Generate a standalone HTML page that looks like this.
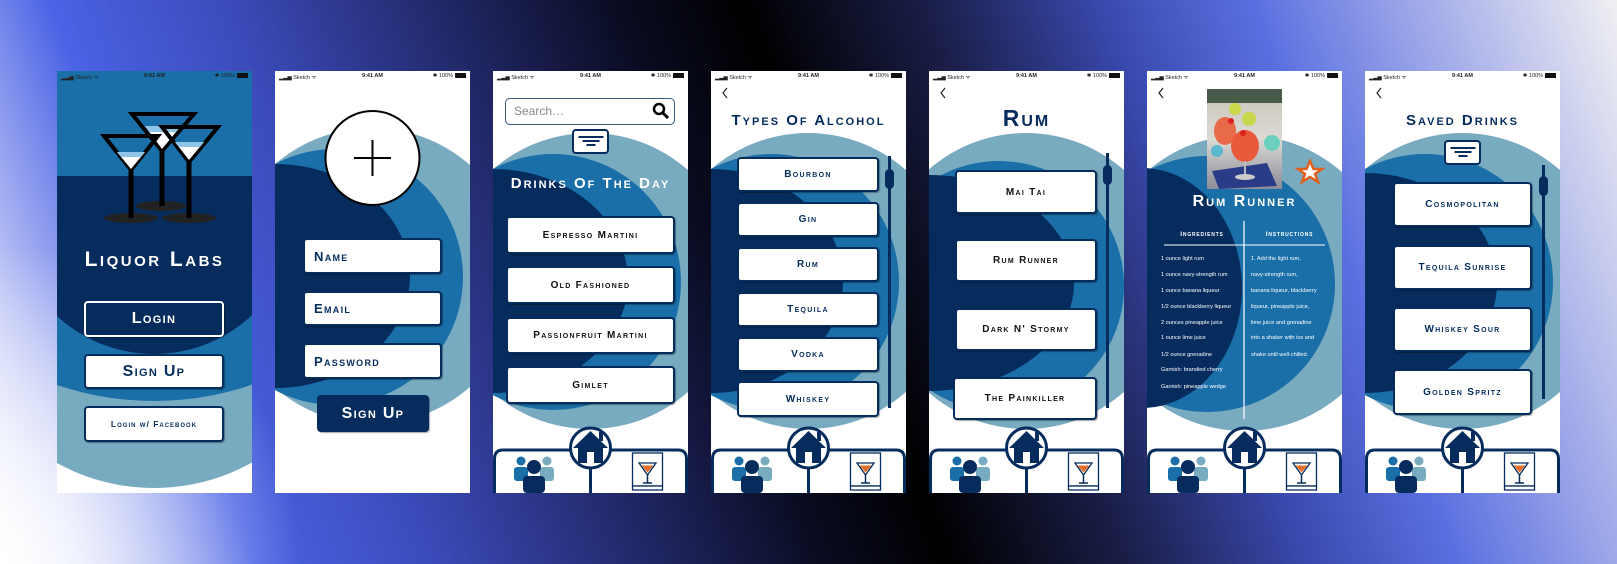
<!DOCTYPE html>
<html><head><meta charset="utf-8"><style>
*{margin:0;padding:0;box-sizing:border-box}
body{width:1617px;height:564px;overflow:hidden;position:relative;font-family:"Liberation Sans",sans-serif;
background:
radial-gradient(ellipse 300px 320px at 0% 100%,rgba(255,255,255,.95),rgba(255,255,255,0) 100%),
linear-gradient(70deg,#ffffff 0%,#b8c0f4 6%,#4a63e5 14%,#3b4ab8 24%,#22296a 35%,#0a0c22 45%,#000 52%,#1a1e48 62%,#3a4ab0 72%,#5a70e0 80%,#a8b0ea 90%,#f0f0f2 100%);}
.s{position:absolute;top:71px;width:195px;height:422px;overflow:hidden;background:#fff}
.bg{position:absolute;left:0;top:0}
.st{position:absolute;left:0;top:0;width:195px;height:11px;font-size:5.5px;color:#222}
.st .l{position:absolute;left:4px;top:2px}
.st .c{position:absolute;left:0;width:195px;text-align:center;top:2px;font-weight:bold}
.st .r{position:absolute;right:4px;top:2px}
.bat{display:inline-block;width:11px;height:5px;background:#111;vertical-align:-1px;margin-left:2px}
.btn{position:absolute;background:#fff;border:2px solid #062c5e;border-radius:4px;box-shadow:1px 1px 1px rgba(0,0,0,.35);display:flex;align-items:center;justify-content:center;font-weight:bold;font-variant:small-caps;color:#111;letter-spacing:1.3px;font-size:10px;white-space:nowrap}
.ttl{position:absolute;left:0;width:195px;text-align:center;font-weight:bold;font-variant:small-caps;letter-spacing:2px;white-space:nowrap}
.sb{position:absolute;width:3px;background:#062c5e}
.th{position:absolute;width:9px;height:20px;border-radius:5px;background:#062c5e}
.flt{position:absolute;width:37px;height:25px;border:2px solid #062c5e;border-radius:4px;background:#fff}
.flt i{position:absolute;height:2px;background:#062c5e;left:50%;transform:translateX(-50%)}
.tx{position:absolute;font-size:5.6px;color:#fff;white-space:nowrap}
</style></head><body>

<!-- Screen 1 -->
<div class="s" style="left:57px;background:#fff">
<svg class="bg" width="195" height="422">
<rect width="195" height="422" fill="#fff"/>
<circle cx="97" cy="216" r="201" fill="#78aac0"/>
<rect x="0" y="0" width="195" height="105" fill="#1a6fa8"/>
<circle cx="97" cy="28" r="302" fill="#1a6fa8" clip-path="url(#c1)"/>
<clipPath id="c1"><rect x="0" y="0" width="195" height="400"/></clipPath>
<clipPath id="c2"><rect x="0" y="105" width="195" height="300"/></clipPath>
<circle cx="97" cy="140" r="143" fill="#062c5e" clip-path="url(#c2)"/>
<ellipse cx="104" cy="135" rx="25" ry="5" fill="#222"/>
<ellipse cx="74" cy="147" rx="27" ry="5" fill="#222"/>
<ellipse cx="132" cy="147" rx="27" ry="5" fill="#222"/>
<polygon points="75,43 137,43 105,80" fill="none" stroke="#000" stroke-width="4"/>
<polygon points="88,55 124,55 105,78" fill="#fff"/>
<polygon points="88,55 124,55 119,61 93,61" fill="#8fc6e8"/>
<line x1="105" y1="80" x2="105" y2="135" stroke="#000" stroke-width="5"/>
<polygon points="47,65 101,65 74,99" fill="none" stroke="#000" stroke-width="4"/>
<polygon points="60,81 88,81 74,98" fill="#fff"/>
<polygon points="60,81 88,81 84,86 64,86" fill="#8fc6e8"/>
<line x1="74" y1="99" x2="74" y2="147" stroke="#000" stroke-width="5"/>
<polygon points="105,56 161,56 132,91" fill="none" stroke="#000" stroke-width="4"/>
<polygon points="118,71 147,71 132,89" fill="#fff"/>
<polygon points="118,71 147,71 143,76 122,76" fill="#8fc6e8"/>
<line x1="132" y1="91" x2="132" y2="147" stroke="#000" stroke-width="5"/>
</svg>
<div class="st"><span class="l">▂▃▅ Sketch ᯤ</span><span class="c">9:41 AM</span><span class="r">✱ 100%<span class="bat"></span></span></div>
<div class="ttl" style="top:177px;font-size:21px;color:#fff;letter-spacing:2.5px">Liquor Labs</div>
<div class="btn" style="left:27px;top:230px;width:140px;height:36px;background:#062c5e;border-color:#fff;color:#fff;font-size:16px">Login</div>
<div class="btn" style="left:27px;top:283px;width:140px;height:35px;color:#062c5e;font-size:16px">Sign Up</div>
<div class="btn" style="left:27px;top:335px;width:140px;height:36px;color:#062c5e;font-size:8.5px;letter-spacing:1px">Login w/ Facebook</div>
</div>

<!-- Screen 2 -->
<div class="s" style="left:275px">
<svg class="bg" width="195" height="422">
<circle cx="97" cy="205" r="148" fill="#78aac0"/>
<circle cx="60" cy="206" r="128" fill="#1a6fa8"/>
<ellipse cx="0" cy="205" rx="135" ry="112" fill="#062c5e"/>
<circle cx="97.5" cy="87" r="47" fill="#fff" stroke="#000" stroke-width="2"/>
<line x1="79" y1="87" x2="116" y2="87" stroke="#000" stroke-width="2"/>
<line x1="97.5" y1="69" x2="97.5" y2="105" stroke="#000" stroke-width="2"/>
</svg>
<div class="st"><span class="l">▂▃▅ Sketch ᯤ</span><span class="c">9:41 AM</span><span class="r">✱ 100%<span class="bat"></span></span></div>
<div class="btn" style="left:28px;top:167px;width:139px;height:36px;justify-content:flex-start;padding-left:9px;color:#062c5e;font-size:13px">Name</div>
<div class="btn" style="left:28px;top:220px;width:139px;height:35px;justify-content:flex-start;padding-left:9px;color:#062c5e;font-size:13px">Email</div>
<div class="btn" style="left:28px;top:272px;width:139px;height:36px;justify-content:flex-start;padding-left:9px;color:#062c5e;font-size:13px">Password</div>
<div class="btn" style="left:42px;top:324px;width:112px;height:37px;background:#062c5e;border-color:#062c5e;color:#fff;font-size:16px">Sign Up</div>
</div>

<!-- Screen 3 -->
<div class="s" style="left:493px">
<svg class="bg" width="195" height="422">
<circle cx="97" cy="210" r="148" fill="#78aac0"/>
<circle cx="60" cy="211" r="128" fill="#1a6fa8"/>
<ellipse cx="0" cy="210" rx="135" ry="112" fill="#062c5e"/>
</svg>
<div class="st"><span class="l">▂▃▅ Sketch ᯤ</span><span class="c">9:41 AM</span><span class="r">✱ 100%<span class="bat"></span></span></div>
<div style="position:absolute;left:12px;top:27px;width:170px;height:27px;border:1.5px solid #3a5a80;border-radius:5px;background:#fff;font-size:12px;color:#888;padding:5px 8px">Search…</div>
<svg style="position:absolute;left:159px;top:31px" width="18" height="18"><circle cx="7" cy="7" r="5" fill="none" stroke="#000" stroke-width="2.5"/><line x1="10.5" y1="10.5" x2="16" y2="16" stroke="#000" stroke-width="3"/></svg>
<div class="flt" style="left:79px;top:58px"><i style="top:5px;width:25px"></i><i style="top:9px;width:17px"></i><i style="top:13px;width:9px"></i></div>
<div class="ttl" style="top:104px;font-size:15px;color:#fff">Drinks Of The Day</div>
<div class="btn" style="left:13px;top:145px;width:169px;height:38px">Espresso Martini</div>
<div class="btn" style="left:13px;top:195px;width:169px;height:38px">Old Fashioned</div>
<div class="btn" style="left:13px;top:246px;width:169px;height:37px">Passionfruit Martini</div>
<div class="btn" style="left:13px;top:295px;width:169px;height:38px">Gimlet</div>
<svg style="position:absolute;left:0;top:350px" width="195" height="72">
<path d="M1.5,72 V38 Q1.5,29 10,29 H185 Q193.5,29 193.5,38 V72" fill="#fff" stroke="#062c5e" stroke-width="3"/>
<line x1="97.5" y1="46" x2="97.5" y2="72" stroke="#062c5e" stroke-width="3"/>
<circle cx="97.5" cy="27" r="20" fill="#fff" stroke="#062c5e" stroke-width="3"/>
<polygon points="80,27 97.5,10 115,27" fill="#062c5e"/><rect x="106" y="11" width="4" height="9" fill="#062c5e"/>
<rect x="85" y="24" width="25" height="18" fill="#062c5e"/><rect x="94" y="31" width="7" height="11" fill="#fff"/>
<circle cx="28" cy="40" r="4.5" fill="#1a6fa8"/><rect x="21" y="46" width="14" height="14" rx="3" fill="#1a6fa8"/>
<circle cx="54" cy="40" r="4.5" fill="#78aac0"/><rect x="47" y="46" width="14" height="14" rx="3" fill="#78aac0"/>
<circle cx="41" cy="46" r="7" fill="#062c5e"/><rect x="30" y="55" width="22" height="17" rx="4" fill="#062c5e"/>
<rect x="139.5" y="32" width="30" height="33" fill="#fff" stroke="#062c5e" stroke-width="1.3"/>
<rect x="139.5" y="65" width="30" height="4" fill="#fff" stroke="#062c5e" stroke-width="1.3"/>
<polygon points="146,42 163,42 154.5,54" fill="#fff" stroke="#062c5e" stroke-width="1.3"/>
<polygon points="148.5,44.5 160.5,44.5 154.5,51.5" fill="#e0702a"/>
<line x1="154.5" y1="54" x2="154.5" y2="62" stroke="#062c5e" stroke-width="1.5"/><line x1="150" y1="62" x2="159" y2="62" stroke="#062c5e" stroke-width="1.5"/>
</svg>
</div>

<!-- Screen 4 -->
<div class="s" style="left:711px">
<svg class="bg" width="195" height="422">
<circle cx="97" cy="210" r="148" fill="#78aac0"/>
<circle cx="60" cy="211" r="128" fill="#1a6fa8"/>
<ellipse cx="0" cy="210" rx="132" ry="112" fill="#062c5e"/>
<polyline points="16,17 12,22 16,27" fill="none" stroke="#222" stroke-width="1.2"/>
</svg>
<div class="st"><span class="l">▂▃▅ Sketch ᯤ</span><span class="c">9:41 AM</span><span class="r">✱ 100%<span class="bat"></span></span></div>
<div class="ttl" style="top:41px;font-size:15px;color:#062c5e">Types Of Alcohol</div>
<div class="btn" style="left:26px;top:86px;width:142px;height:35px;color:#062c5e">Bourbon</div>
<div class="btn" style="left:26px;top:131px;width:142px;height:35px;color:#062c5e">Gin</div>
<div class="btn" style="left:26px;top:176px;width:142px;height:35px;color:#062c5e">Rum</div>
<div class="btn" style="left:26px;top:221px;width:142px;height:35px;color:#062c5e">Tequila</div>
<div class="btn" style="left:26px;top:266px;width:142px;height:35px;color:#062c5e">Vodka</div>
<div class="btn" style="left:26px;top:310px;width:142px;height:36px;color:#062c5e">Whiskey</div>
<div class="sb" style="left:177px;top:85px;height:252px"></div><div class="th" style="left:174px;top:98px"></div>
<svg style="position:absolute;left:0;top:350px" width="195" height="72">
<path d="M1.5,72 V38 Q1.5,29 10,29 H185 Q193.5,29 193.5,38 V72" fill="#fff" stroke="#062c5e" stroke-width="3"/>
<line x1="97.5" y1="46" x2="97.5" y2="72" stroke="#062c5e" stroke-width="3"/>
<circle cx="97.5" cy="27" r="20" fill="#fff" stroke="#062c5e" stroke-width="3"/>
<polygon points="80,27 97.5,10 115,27" fill="#062c5e"/><rect x="106" y="11" width="4" height="9" fill="#062c5e"/>
<rect x="85" y="24" width="25" height="18" fill="#062c5e"/><rect x="94" y="31" width="7" height="11" fill="#fff"/>
<circle cx="28" cy="40" r="4.5" fill="#1a6fa8"/><rect x="21" y="46" width="14" height="14" rx="3" fill="#1a6fa8"/>
<circle cx="54" cy="40" r="4.5" fill="#78aac0"/><rect x="47" y="46" width="14" height="14" rx="3" fill="#78aac0"/>
<circle cx="41" cy="46" r="7" fill="#062c5e"/><rect x="30" y="55" width="22" height="17" rx="4" fill="#062c5e"/>
<rect x="139.5" y="32" width="30" height="33" fill="#fff" stroke="#062c5e" stroke-width="1.3"/>
<rect x="139.5" y="65" width="30" height="4" fill="#fff" stroke="#062c5e" stroke-width="1.3"/>
<polygon points="146,42 163,42 154.5,54" fill="#fff" stroke="#062c5e" stroke-width="1.3"/>
<polygon points="148.5,44.5 160.5,44.5 154.5,51.5" fill="#e0702a"/>
<line x1="154.5" y1="54" x2="154.5" y2="62" stroke="#062c5e" stroke-width="1.5"/><line x1="150" y1="62" x2="159" y2="62" stroke="#062c5e" stroke-width="1.5"/>
</svg>
</div>

<!-- Screen 5 -->
<div class="s" style="left:929px">
<svg class="bg" width="195" height="422">
<circle cx="97" cy="210" r="148" fill="#78aac0"/>
<circle cx="70" cy="215" r="125" fill="#1a6fa8"/>
<ellipse cx="0" cy="212" rx="145" ry="108" fill="#062c5e"/>
<polyline points="16,17 12,22 16,27" fill="none" stroke="#222" stroke-width="1.2"/>
</svg>
<div class="st"><span class="l">▂▃▅ Sketch ᯤ</span><span class="c">9:41 AM</span><span class="r">✱ 100%<span class="bat"></span></span></div>
<div class="ttl" style="top:34px;font-size:23px;color:#062c5e">Rum</div>
<div class="btn" style="left:26px;top:99px;width:142px;height:44px">Mai Tai</div>
<div class="btn" style="left:26px;top:168px;width:142px;height:43px">Rum Runner</div>
<div class="btn" style="left:26px;top:237px;width:142px;height:43px">Dark N' Stormy</div>
<div class="btn" style="left:24px;top:306px;width:144px;height:43px">The Painkiller</div>
<div class="sb" style="left:177px;top:82px;height:255px"></div><div class="th" style="left:174px;top:94px"></div>
<svg style="position:absolute;left:0;top:350px" width="195" height="72">
<path d="M1.5,72 V38 Q1.5,29 10,29 H185 Q193.5,29 193.5,38 V72" fill="#fff" stroke="#062c5e" stroke-width="3"/>
<line x1="97.5" y1="46" x2="97.5" y2="72" stroke="#062c5e" stroke-width="3"/>
<circle cx="97.5" cy="27" r="20" fill="#fff" stroke="#062c5e" stroke-width="3"/>
<polygon points="80,27 97.5,10 115,27" fill="#062c5e"/><rect x="106" y="11" width="4" height="9" fill="#062c5e"/>
<rect x="85" y="24" width="25" height="18" fill="#062c5e"/><rect x="94" y="31" width="7" height="11" fill="#fff"/>
<circle cx="28" cy="40" r="4.5" fill="#1a6fa8"/><rect x="21" y="46" width="14" height="14" rx="3" fill="#1a6fa8"/>
<circle cx="54" cy="40" r="4.5" fill="#78aac0"/><rect x="47" y="46" width="14" height="14" rx="3" fill="#78aac0"/>
<circle cx="41" cy="46" r="7" fill="#062c5e"/><rect x="30" y="55" width="22" height="17" rx="4" fill="#062c5e"/>
<rect x="139.5" y="32" width="30" height="33" fill="#fff" stroke="#062c5e" stroke-width="1.3"/>
<rect x="139.5" y="65" width="30" height="4" fill="#fff" stroke="#062c5e" stroke-width="1.3"/>
<polygon points="146,42 163,42 154.5,54" fill="#fff" stroke="#062c5e" stroke-width="1.3"/>
<polygon points="148.5,44.5 160.5,44.5 154.5,51.5" fill="#e0702a"/>
<line x1="154.5" y1="54" x2="154.5" y2="62" stroke="#062c5e" stroke-width="1.5"/><line x1="150" y1="62" x2="159" y2="62" stroke="#062c5e" stroke-width="1.5"/>
</svg>
</div>

<!-- Screen 6 -->
<div class="s" style="left:1147px">
<svg class="bg" width="195" height="422">
<circle cx="97" cy="212" r="148" fill="#78aac0"/>
<circle cx="60" cy="213" r="128" fill="#1a6fa8"/>
<ellipse cx="-5" cy="217" rx="100" ry="120" fill="#062c5e"/>
<polyline points="16,17 12,22 16,27" fill="none" stroke="#222" stroke-width="1.2"/>
<defs><linearGradient id="ph" x1="0" y1="0" x2="0" y2="1"><stop offset="0" stop-color="#c8c4b8"/><stop offset=".5" stop-color="#dcdad4"/><stop offset="1" stop-color="#8a8c98"/></linearGradient></defs>
<rect x="60" y="18" width="75" height="100" fill="url(#ph)"/>
<rect x="60" y="18" width="75" height="14" fill="#4a5a48"/>
<polygon points="65,100 120,92 130,115 72,118" fill="#2a3c88"/>
<ellipse cx="78" cy="60" rx="11" ry="14" fill="#e86a48"/>
<ellipse cx="98" cy="75" rx="14" ry="16" fill="#e85a3a"/>
<circle cx="102" cy="48" r="7" fill="#c8d84a"/><circle cx="88" cy="38" r="6" fill="#c8d84a"/>
<circle cx="84" cy="50" r="3" fill="#e02020"/><circle cx="96" cy="62" r="3" fill="#e02020"/>
<circle cx="70" cy="80" r="6" fill="#5ab8d0"/><circle cx="125" cy="72" r="8" fill="#6ad0c0"/>
<line x1="98" y1="90" x2="98" y2="105" stroke="#bbb" stroke-width="2"/><ellipse cx="98" cy="106" rx="10" ry="3" fill="#ccc"/>
<polygon points="163,90 166.5,98 175,98 168,103 171,111 163,106 155,111 158,103 151,98 159.5,98" fill="#fff" stroke="#e0601a" stroke-width="2.5"/>
<line x1="17" y1="174" x2="178" y2="174" stroke="#fff" stroke-width="1"/>
<line x1="97" y1="150" x2="97" y2="348" stroke="#fff" stroke-width="1.2"/>
</svg>
<div class="st"><span class="l">▂▃▅ Sketch ᯤ</span><span class="c">9:41 AM</span><span class="r">✱ 100%<span class="bat"></span></span></div>
<div class="ttl" style="top:122px;font-size:16px;color:#fff">Rum Runner</div>
<div class="tx" style="left:20px;top:160px;width:70px;text-align:center;font-weight:bold;font-variant:small-caps;letter-spacing:.8px;font-size:6.5px">Ingredients</div>
<div class="tx" style="left:105px;top:160px;width:75px;text-align:center;font-weight:bold;font-variant:small-caps;letter-spacing:.8px;font-size:6.5px">Instructions</div>
<div class="tx" style="left:14px;top:185px">1 ounce light rum</div>
<div class="tx" style="left:14px;top:201px">1 ounce navy-strength rum</div>
<div class="tx" style="left:14px;top:217px">1 ounce banana liqueur</div>
<div class="tx" style="left:14px;top:233px">1/2 ounce blackberry liqueur</div>
<div class="tx" style="left:14px;top:249px">2 ounces pineapple juice</div>
<div class="tx" style="left:14px;top:264px">1 ounce lime juice</div>
<div class="tx" style="left:14px;top:281px">1/2 ounce grenadine</div>
<div class="tx" style="left:14px;top:296px">Garnish: brandied cherry</div>
<div class="tx" style="left:14px;top:313px">Garnish: pineapple wedge</div>
<div class="tx" style="left:104px;top:185px">1. Add the light rum,</div>
<div class="tx" style="left:104px;top:201px">navy-strength rum,</div>
<div class="tx" style="left:104px;top:217px">banana liqueur, blackberry</div>
<div class="tx" style="left:104px;top:233px">liqueur, pineapple juice,</div>
<div class="tx" style="left:104px;top:249px">lime juice and grenadine</div>
<div class="tx" style="left:104px;top:264px">into a shaker with ice and</div>
<div class="tx" style="left:104px;top:281px">shake until well-chilled.</div>
<svg style="position:absolute;left:0;top:350px" width="195" height="72">
<path d="M1.5,72 V38 Q1.5,29 10,29 H185 Q193.5,29 193.5,38 V72" fill="#fff" stroke="#062c5e" stroke-width="3"/>
<line x1="97.5" y1="46" x2="97.5" y2="72" stroke="#062c5e" stroke-width="3"/>
<circle cx="97.5" cy="27" r="20" fill="#fff" stroke="#062c5e" stroke-width="3"/>
<polygon points="80,27 97.5,10 115,27" fill="#062c5e"/><rect x="106" y="11" width="4" height="9" fill="#062c5e"/>
<rect x="85" y="24" width="25" height="18" fill="#062c5e"/><rect x="94" y="31" width="7" height="11" fill="#fff"/>
<circle cx="28" cy="40" r="4.5" fill="#1a6fa8"/><rect x="21" y="46" width="14" height="14" rx="3" fill="#1a6fa8"/>
<circle cx="54" cy="40" r="4.5" fill="#78aac0"/><rect x="47" y="46" width="14" height="14" rx="3" fill="#78aac0"/>
<circle cx="41" cy="46" r="7" fill="#062c5e"/><rect x="30" y="55" width="22" height="17" rx="4" fill="#062c5e"/>
<rect x="139.5" y="32" width="30" height="33" fill="#fff" stroke="#062c5e" stroke-width="1.3"/>
<rect x="139.5" y="65" width="30" height="4" fill="#fff" stroke="#062c5e" stroke-width="1.3"/>
<polygon points="146,42 163,42 154.5,54" fill="#fff" stroke="#062c5e" stroke-width="1.3"/>
<polygon points="148.5,44.5 160.5,44.5 154.5,51.5" fill="#e0702a"/>
<line x1="154.5" y1="54" x2="154.5" y2="62" stroke="#062c5e" stroke-width="1.5"/><line x1="150" y1="62" x2="159" y2="62" stroke="#062c5e" stroke-width="1.5"/>
</svg>
</div>

<!-- Screen 7 -->
<div class="s" style="left:1365px">
<svg class="bg" width="195" height="422">
<circle cx="97" cy="210" r="148" fill="#78aac0"/>
<circle cx="60" cy="211" r="128" fill="#1a6fa8"/>
<ellipse cx="0" cy="212" rx="132" ry="110" fill="#062c5e"/>
<polyline points="16,17 12,22 16,27" fill="none" stroke="#222" stroke-width="1.2"/>
</svg>
<div class="st"><span class="l">▂▃▅ Sketch ᯤ</span><span class="c">9:41 AM</span><span class="r">✱ 100%<span class="bat"></span></span></div>
<div class="ttl" style="top:41px;font-size:15px;color:#062c5e">Saved Drinks</div>
<div class="flt" style="left:79px;top:69px"><i style="top:5px;width:25px"></i><i style="top:9px;width:17px"></i><i style="top:13px;width:9px"></i></div>
<div class="btn" style="left:28px;top:111px;width:139px;height:45px;color:#062c5e">Cosmopolitan</div>
<div class="btn" style="left:28px;top:174px;width:139px;height:45px;color:#062c5e">Tequila Sunrise</div>
<div class="btn" style="left:28px;top:236px;width:139px;height:45px;color:#062c5e">Whiskey Sour</div>
<div class="btn" style="left:28px;top:298px;width:139px;height:46px;color:#062c5e">Golden Spritz</div>
<div class="sb" style="left:177px;top:94px;height:234px"></div><div class="th" style="left:174px;top:105px"></div>
<svg style="position:absolute;left:0;top:350px" width="195" height="72">
<path d="M1.5,72 V38 Q1.5,29 10,29 H185 Q193.5,29 193.5,38 V72" fill="#fff" stroke="#062c5e" stroke-width="3"/>
<line x1="97.5" y1="46" x2="97.5" y2="72" stroke="#062c5e" stroke-width="3"/>
<circle cx="97.5" cy="27" r="20" fill="#fff" stroke="#062c5e" stroke-width="3"/>
<polygon points="80,27 97.5,10 115,27" fill="#062c5e"/><rect x="106" y="11" width="4" height="9" fill="#062c5e"/>
<rect x="85" y="24" width="25" height="18" fill="#062c5e"/><rect x="94" y="31" width="7" height="11" fill="#fff"/>
<circle cx="28" cy="40" r="4.5" fill="#1a6fa8"/><rect x="21" y="46" width="14" height="14" rx="3" fill="#1a6fa8"/>
<circle cx="54" cy="40" r="4.5" fill="#78aac0"/><rect x="47" y="46" width="14" height="14" rx="3" fill="#78aac0"/>
<circle cx="41" cy="46" r="7" fill="#062c5e"/><rect x="30" y="55" width="22" height="17" rx="4" fill="#062c5e"/>
<rect x="139.5" y="32" width="30" height="33" fill="#fff" stroke="#062c5e" stroke-width="1.3"/>
<rect x="139.5" y="65" width="30" height="4" fill="#fff" stroke="#062c5e" stroke-width="1.3"/>
<polygon points="146,42 163,42 154.5,54" fill="#fff" stroke="#062c5e" stroke-width="1.3"/>
<polygon points="148.5,44.5 160.5,44.5 154.5,51.5" fill="#e0702a"/>
<line x1="154.5" y1="54" x2="154.5" y2="62" stroke="#062c5e" stroke-width="1.5"/><line x1="150" y1="62" x2="159" y2="62" stroke="#062c5e" stroke-width="1.5"/>
</svg>
</div>

</body></html>
